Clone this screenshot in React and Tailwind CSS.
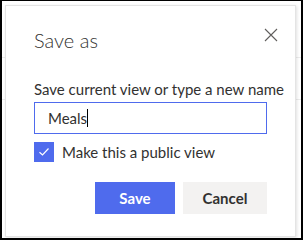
import React from "react";

function CloseIcon() {
  return (
    <svg width="14" height="14" viewBox="0 0 14 14" fill="none">
      <path d="M1 1L13 13M13 1L1 13" stroke="#605e5c" strokeWidth="1.1" />
    </svg>
  );
}

function CheckMark() {
  return (
    <svg width="12" height="10" viewBox="0 0 12 10" fill="none">
      <path d="M1.5 5.2L4.5 8L10.5 1.5" stroke="#ffffff" strokeWidth="1.2" />
    </svg>
  );
}

export default function App() {
  return (
    <div
      className="relative w-[303px] h-[240px] bg-white border-l-2 border-t border-r-2 border-b-2 border-black overflow-hidden"
      style={{ fontFamily: '"Segoe UI", Lato, "Open Sans", sans-serif' }}
    >
      {/* page behind the dialog */}
      <div className="h-[57px] border-b border-[#ececec]" />
      <div className="h-[42px] border-b border-[#ececec]" />

      <div className="absolute left-[3px] top-[4px] w-[291px] h-[232px] bg-white border border-[#e4e4e4] shadow-[1px_1px_3px_rgba(0,0,0,0.12)] px-[28px]">
        <button className="absolute right-[17px] top-[22px] w-[14px] h-[14px] flex items-center justify-center">
          <CloseIcon />
        </button>

        <h2 className="pt-[20px] text-[20px] leading-[28px] font-light text-[#323130]">Save as</h2>

        <label className="block mt-[25px] whitespace-nowrap text-[15px] leading-[20px] text-[#323130]">
          Save current view or type a new name
        </label>

        <div className="mt-[3px] h-[32px] border border-[#4f6bed] flex items-center pl-[13px] text-[15px] text-[#323130]">
          <span>Meals</span>
          <span className="w-px h-[18px] bg-black" />
        </div>

        <div className="mt-[8px] flex items-center gap-[8px]">
          <div className="w-[20px] h-[20px] bg-[#4f6bed] flex items-center justify-center">
            <CheckMark />
          </div>
          <span className="text-[15px] leading-[20px] text-[#323130]">Make this a public view</span>
        </div>

        <div className="mt-[20px] flex justify-end gap-[8px]">
          <button className="w-[80px] h-[32px] bg-[#4f6bed] text-white text-[15px] font-bold">Save</button>
          <button className="w-[84px] h-[32px] bg-[#f3f2f1] text-[#323130] text-[15px] font-bold">Cancel</button>
        </div>
      </div>
    </div>
  );
}
